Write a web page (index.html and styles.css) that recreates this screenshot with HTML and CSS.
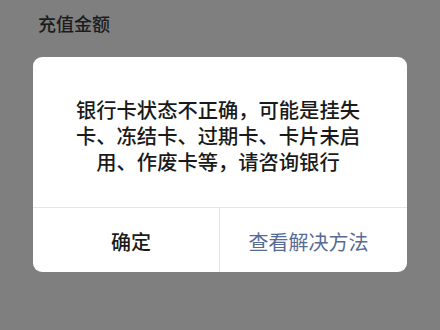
FILE: index.html
```html
<!DOCTYPE html>
<html lang="zh">
<head>
<meta charset="utf-8">
<link rel="stylesheet" href="styles.css">
</head>
<body>
<div class="page">
  <div class="title">充值金额</div>
  <div class="dialog">
    <div class="message">银行卡状态不正确，可能是挂失卡、冻结卡、过期卡、卡片未启用、作废卡等，请咨询银行</div>
    <div class="actions">
      <div class="btn ok">确定</div>
      <div class="btn link">查看解决方法</div>
    </div>
  </div>
</div>
</body>
</html>
```
FILE: styles.css
```css
html, body {
  margin: 0;
  padding: 0;
  background: #7f7f7f;
}
.page {
  width: 440px;
  height: 330px;
  overflow: hidden;
  font-family: "Noto Sans CJK SC", "Noto Sans", sans-serif;
}
.title {
  padding: 10px 0 0 38px;
  height: 26px;
  line-height: 26px;
  font-size: 18px;
  font-weight: 500;
  color: #1c1c1c;
}
.dialog {
  margin: 21px 0 0 33px;
  width: 374px;
  background: #fff;
  border-radius: 9px;
  overflow: hidden;
}
.message {
  height: 151px;
  box-sizing: border-box;
  padding: 6px 42px 0 38px;
  display: flex;
  align-items: center;
  justify-content: center;
  text-align: center;
  font-size: 20.3px;
  font-weight: 500;
  line-height: 26px;
  color: #1a1a1a;
  border-bottom: 1px solid #e6e6e6;
}
.actions {
  display: grid;
  grid-template-columns: 187px 1fr;
  height: 64px;
}
.btn {
  display: flex;
  align-items: center;
  justify-content: center;
  font-size: 20px;
  padding-top: 2px;
}
.ok {
  color: #1a1a1a;
  font-weight: 500;
  border-right: 1px solid #e6e6e6;
  padding-left: 10px;
}
.link {
  color: #576b95;
  padding-right: 10px;
}
```
